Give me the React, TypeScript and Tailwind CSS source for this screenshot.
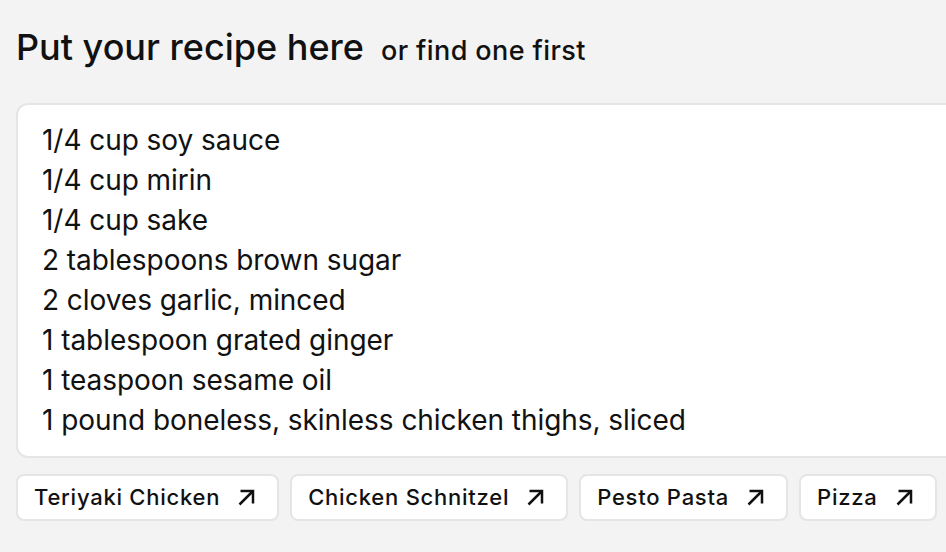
import React from "react";

const lines = [
  "1/4 cup soy sauce",
  "1/4 cup mirin",
  "1/4 cup sake",
  "2 tablespoons brown sugar",
  "2 cloves garlic, minced",
  "1 tablespoon grated ginger",
  "1 teaspoon sesame oil",
  "1 pound boneless, skinless chicken thighs, sliced",
];

const recipes = ["Teriyaki Chicken", "Chicken Schnitzel", "Pesto Pasta", "Pizza"];

function Arrow() {
  return (
    <svg width="17" height="17" viewBox="0 0 17 17" fill="none" stroke="#111" strokeWidth="2.5" strokeLinecap="butt">
      <path d="M1.5 15.5 L15 2" />
      <path d="M2.5 2 H15 V14.5" />
    </svg>
  );
}

export default function App() {
  return (
    <div className="w-[946px] h-[552px] overflow-hidden bg-[#f3f3f3] text-[#111] font-['Inter',sans-serif]">
      <div className="pl-4 pt-[25px]">
        <div className="flex items-baseline gap-[17px]">
          <h1 className="text-[36px] font-medium leading-[44px]">Put your recipe here</h1>
          <span className="text-[27px] font-medium tracking-[0.4px]">or find one first</span>
        </div>
        <div className="mt-[31px] w-[1000px] bg-white border-2 border-[#e5e5e5] rounded-xl pl-6 pt-[15px] pb-[16px]">
          {lines.map((l) => (
            <div key={l} className="text-[28px] leading-[40px] tracking-[-0.05px]">{l}</div>
          ))}
        </div>
        <div className="mt-[16px] flex gap-[11px]">
          {recipes.map((r) => (
            <button key={r} className="flex items-center gap-[18px] h-[47px] pl-[16px] pr-[22px] bg-white border-2 border-[#e5e5e5] rounded-lg text-[22px] font-medium tracking-[0.75px]">
              <span>{r}</span>
              <Arrow />
            </button>
          ))}
        </div>
      </div>
    </div>
  );
}
